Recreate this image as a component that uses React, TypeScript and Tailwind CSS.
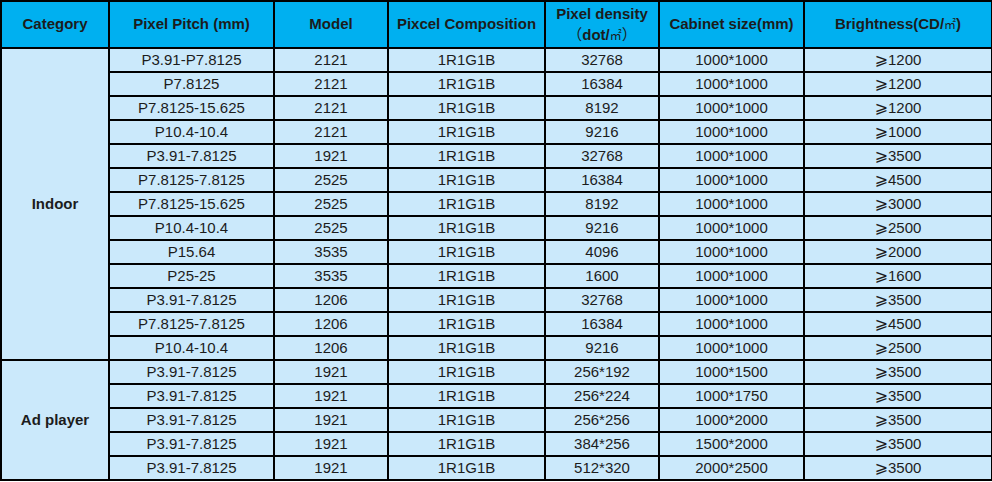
const rows = [
  ['P3.91-P7.8125', '2121', '1R1G1B', '32768', '1000*1000', '1200'],
  ['P7.8125', '2121', '1R1G1B', '16384', '1000*1000', '1200'],
  ['P7.8125-15.625', '2121', '1R1G1B', '8192', '1000*1000', '1200'],
  ['P10.4-10.4', '2121', '1R1G1B', '9216', '1000*1000', '1000'],
  ['P3.91-7.8125', '1921', '1R1G1B', '32768', '1000*1000', '3500'],
  ['P7.8125-7.8125', '2525', '1R1G1B', '16384', '1000*1000', '4500'],
  ['P7.8125-15.625', '2525', '1R1G1B', '8192', '1000*1000', '3000'],
  ['P10.4-10.4', '2525', '1R1G1B', '9216', '1000*1000', '2500'],
  ['P15.64', '3535', '1R1G1B', '4096', '1000*1000', '2000'],
  ['P25-25', '3535', '1R1G1B', '1600', '1000*1000', '1600'],
  ['P3.91-7.8125', '1206', '1R1G1B', '32768', '1000*1000', '3500'],
  ['P7.8125-7.8125', '1206', '1R1G1B', '16384', '1000*1000', '4500'],
  ['P10.4-10.4', '1206', '1R1G1B', '9216', '1000*1000', '2500'],
];

const adRows = [
  ['P3.91-7.8125', '1921', '1R1G1B', '256*192', '1000*1500', '3500'],
  ['P3.91-7.8125', '1921', '1R1G1B', '256*224', '1000*1750', '3500'],
  ['P3.91-7.8125', '1921', '1R1G1B', '256*256', '1000*2000', '3500'],
  ['P3.91-7.8125', '1921', '1R1G1B', '384*256', '1500*2000', '3500'],
  ['P3.91-7.8125', '1921', '1R1G1B', '512*320', '2000*2500', '3500'],
];

const font = { fontFamily: '"Liberation Sans", "Noto Sans CJK SC", sans-serif' };
const cjk = { fontFamily: '"Noto Sans CJK SC", sans-serif' };

const Cells = ({ r }: { r: string[] }) => (
  <>
    {r.slice(0, 5).map((c, i) => (
      <td key={i} className="border-2 border-black p-0 text-center h-[24px] leading-[20px]">
        {c}
      </td>
    ))}
    <td className="border-2 border-black p-0 text-center h-[24px] leading-[20px]">
      <span style={{ fontFamily: '"DejaVu Sans", sans-serif' }} className="text-[16px] leading-none">⩾</span>
      {r[5]}
    </td>
  </>
);

export default function App() {
  return (
    <div className="w-[992px] h-[482px] bg-white overflow-hidden" style={font}>
      <table className="border-collapse table-fixed w-[991px] text-[15px] text-[#1c1c1c] bg-[#cbe9fb]">
        <colgroup>
          <col className="w-[108px]" />
          <col className="w-[165px]" />
          <col className="w-[114px]" />
          <col className="w-[157px]" />
          <col className="w-[114px]" />
          <col className="w-[145px]" />
          <col className="w-[188px]" />
        </colgroup>
        <thead>
          <tr className="bg-[#00b0f0] font-bold">
            <th className="border-2 border-black h-[47px] p-0">Category</th>
            <th className="border-2 border-black p-0">Pixel Pitch (mm)</th>
            <th className="border-2 border-black p-0">Model</th>
            <th className="border-2 border-black p-0">Pixcel Composition</th>
            <th className="border-2 border-black p-0 leading-[20px]">
              Pixel density
              <br />
              <span style={cjk} className="font-normal">（</span>dot/
              <span style={cjk} className="text-[12px] font-normal">㎡</span>
              <span style={cjk} className="font-normal">）</span>
            </th>
            <th className="border-2 border-black p-0">Cabinet size(mm)</th>
            <th className="border-2 border-black p-0">
              Brightness(CD/<span style={cjk} className="text-[12px] font-normal">㎡</span>)
            </th>
          </tr>
        </thead>
        <tbody>
          {rows.map((r, i) => (
            <tr key={i}>
              {i === 0 && (
                <td rowSpan={rows.length} className="border-2 border-black text-center font-bold p-0">
                  Indoor
                </td>
              )}
              <Cells r={r} />
            </tr>
          ))}
          {adRows.map((r, i) => (
            <tr key={i}>
              {i === 0 && (
                <td rowSpan={adRows.length} className="border-2 border-black text-center font-bold p-0">
                  Ad player
                </td>
              )}
              <Cells r={r} />
            </tr>
          ))}
        </tbody>
      </table>
    </div>
  );
}
